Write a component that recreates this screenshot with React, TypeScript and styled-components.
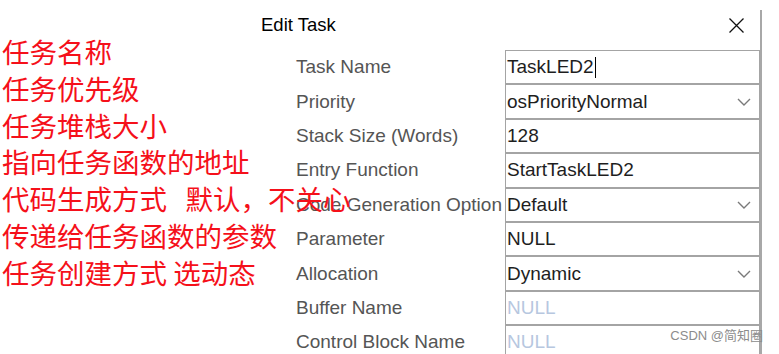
import { Fragment } from 'react'
import styled, { createGlobalStyle } from 'styled-components'

const GlobalStyle = createGlobalStyle`
  html, body {
    margin: 0;
    padding: 0;
    background: #fff;
    overflow: hidden;
  }
`

const Page = styled.div`
  position: relative;
  width: 779px;
  height: 354px;
  overflow: hidden;
  background: #fff;
  font-family: "Liberation Sans", Arial, sans-serif;
`

const Window = styled.div`
  width: 762px;
  height: 344px;
  margin-top: 10px;
  border-right: 2px solid #a8a8a8;
  box-sizing: border-box;
  display: flex;
  flex-direction: column;
`

const TitleBar = styled.div`
  height: 40px;
  flex: none;
  display: flex;
  align-items: center;
  justify-content: space-between;
  padding: 0 16px 10px 261px;
  box-sizing: border-box;
`

const Title = styled.span`
  font-size: 18.5px;
  color: #000;
`

const CloseButton = styled.div`
  width: 15px;
  height: 15px;
  display: flex;
`

const Form = styled.div`
  display: grid;
  grid-template-columns: 209px 255px;
  grid-auto-rows: 34.4px;
  padding-left: 296px;
`

const Label = styled.div`
  display: flex;
  align-items: center;
  font-size: 19px;
  color: #555;
  white-space: nowrap;
`

const Field = styled.div<{ $placeholder?: boolean }>`
  display: flex;
  align-items: center;
  justify-content: space-between;
  border: 1px solid #a4a4a4;
  box-sizing: border-box;
  padding: 0 8px 0 1px;
  font-size: 19px;
  color: ${p => (p.$placeholder ? '#b7c7df' : '#1e1e1e')};
  white-space: nowrap;
`

const Caret = styled.span`
  display: inline-block;
  width: 1px;
  height: 21px;
  background: #000;
  margin-left: 1px;
  vertical-align: middle;
`

const Notes = styled.div`
  position: absolute;
  left: 2px;
  top: 33px;
  font-family: "Noto Sans CJK SC", "Noto Sans", sans-serif;
  font-size: 27.5px;
  font-weight: 400;
  line-height: 36.8px;
  color: #f5101a;
`

const NoteLine = styled.div`
  width: fit-content;
  white-space: pre;
`

const Watermark = styled.div`
  position: absolute;
  right: 16px;
  bottom: 10px;
  font-family: "Liberation Sans", "Noto Sans CJK SC", sans-serif;
  font-size: 13px;
  color: #8c8c8c;
`

const Chevron = () => (
  <svg width="14" height="8" viewBox="0 0 14 8">
    <path d="M1 1 L7 7 L13 1" fill="none" stroke="#7a7a7a" strokeWidth="1.4" />
  </svg>
)

type Row = { label: string; value: string; select?: boolean; placeholder?: boolean; caret?: boolean }

const rows: Row[] = [
  { label: 'Task Name', value: 'TaskLED2', caret: true },
  { label: 'Priority', value: 'osPriorityNormal', select: true },
  { label: 'Stack Size (Words)', value: '128' },
  { label: 'Entry Function', value: 'StartTaskLED2' },
  { label: 'Code Generation Option', value: 'Default', select: true },
  { label: 'Parameter', value: 'NULL' },
  { label: 'Allocation', value: 'Dynamic', select: true },
  { label: 'Buffer Name', value: 'NULL', placeholder: true },
  { label: 'Control Block Name', value: 'NULL', placeholder: true },
]

const notes = [
  '任务名称',
  '任务优先级',
  '任务堆栈大小',
  '指向任务函数的地址',
  '代码生成方式   默认，不关心',
  '传递给任务函数的参数',
  '任务创建方式 选动态',
]

export default function App() {
  return (
    <Page>
      <GlobalStyle />
      <Window>
        <TitleBar>
          <Title>Edit Task</Title>
          <CloseButton>
            <svg width="15" height="15" viewBox="0 0 15 15">
              <path d="M0.5 0.5 L14.5 14.5 M14.5 0.5 L0.5 14.5" stroke="#111" strokeWidth="1.3" />
            </svg>
          </CloseButton>
        </TitleBar>
        <Form>
          {rows.map(r => (
            <Fragment key={r.label}>
              <Label>{r.label}</Label>
              <Field $placeholder={r.placeholder}>
                <span>
                  {r.value}
                  {r.caret && <Caret />}
                </span>
                {r.select && <Chevron />}
              </Field>
            </Fragment>
          ))}
        </Form>
      </Window>
      <Notes>
        {notes.map(n => (
          <NoteLine key={n}>{n}</NoteLine>
        ))}
      </Notes>
      <Watermark>CSDN @简知圈</Watermark>
    </Page>
  )
}
